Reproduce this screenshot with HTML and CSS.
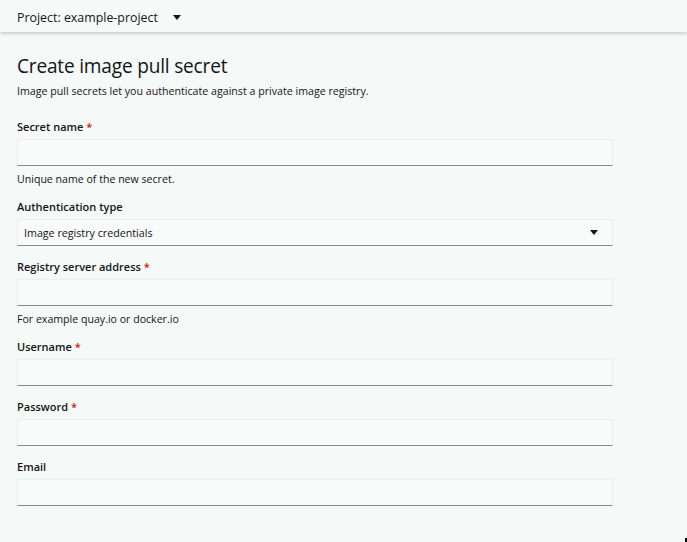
FILE: index.html
```html
<!DOCTYPE html>
<html lang="en">
<head>
<meta charset="utf-8">
<title>Create image pull secret</title>
<link rel="stylesheet" href="styles.css">
</head>
<body>
<header class="topbar">
  <button class="project-toggle" type="button">
    <span class="project-text">Project: example-project</span>
    <svg class="caret" width="8" height="5" viewBox="0 0 8 5"><path d="M0 0h8L4 5z" fill="#151515"/></svg>
  </button>
</header>
<main class="page">
  <h1 class="title">Create image pull secret</h1>
  <p class="subtitle">Image pull secrets let you authenticate against a private image registry.</p>
  <form class="form">
    <div class="group">
      <label class="label">Secret name <span class="req">*</span></label>
      <input class="input" type="text">
      <p class="helper">Unique name of the new secret.</p>
    </div>
    <div class="group">
      <label class="label">Authentication type</label>
      <div class="select">
        <span>Image registry credentials</span>
        <svg class="caret" width="8" height="5" viewBox="0 0 8 5"><path d="M0 0h8L4 5z" fill="#151515"/></svg>
      </div>
    </div>
    <div class="group">
      <label class="label">Registry server address <span class="req">*</span></label>
      <input class="input" type="text">
      <p class="helper">For example quay.io or docker.io</p>
    </div>
    <div class="group">
      <label class="label">Username <span class="req">*</span></label>
      <input class="input" type="text">
    </div>
    <div class="group">
      <label class="label">Password <span class="req">*</span></label>
      <input class="input" type="password">
    </div>
    <div class="group">
      <label class="label">Email</label>
      <input class="input" type="text">
    </div>
  </form>
</main>
<div class="cursor-dot"></div>
</body>
</html>
```
FILE: styles.css
```css
* { box-sizing: border-box; }
html, body { margin: 0; padding: 0; }
body {
  background: #f5f9f7;
  font-family: "Open Sans", "Noto Sans", sans-serif;
  color: #151515;
  height: 542px;
  overflow: hidden;
  position: relative;
}
.topbar {
  height: 32px;
  background: #f6faf8;
  box-shadow: 0 2px 3px rgba(0,0,0,0.16);
  display: flex;
  align-items: center;
  padding-left: 17px;
  position: relative;
  z-index: 1;
}
.project-toggle {
  background: none;
  border: 0;
  padding: 0;
  display: flex;
  align-items: center;
  gap: 15px;
  font: inherit;
  font-size: 12.4px;
  color: #151515;
  margin-top: 2px;
}
.page { padding: 21px 17px 0; }
.title {
  margin: 0;
  font-size: 19.1px;
  font-weight: 400;
  line-height: 26px;
  letter-spacing: -0.2px;
}
.subtitle {
  margin: 4px 0 0;
  font-size: 10.65px;
  line-height: 16px;
  color: #151515;
}
.form { margin-top: 20px; width: 596px; }
.group { display: flex; flex-direction: column; margin-bottom: 13px; }
.label {
  font-size: 11px;
  font-weight: 600;
  line-height: 16px;
  margin-bottom: 4px;
}
.req { color: #c9190b; }
.input, .select {
  height: 27px;
  width: 100%;
  background: #f8fbfa;
  border: 1px solid #ecefee;
  border-bottom-color: #8a8d90;
  border-radius: 0;
  margin: 0;
  font: inherit;
}
.select {
  display: flex;
  align-items: center;
  justify-content: space-between;
  padding: 0 14px 0 6px;
  font-size: 10.7px;
}
.helper {
  margin: 6px 0 0;
  font-size: 10.6px;
  line-height: 14px;
}
.cursor-dot {
  position: absolute;
  right: 0;
  bottom: 0;
  width: 2px;
  height: 4px;
  background: #000;
}
```
